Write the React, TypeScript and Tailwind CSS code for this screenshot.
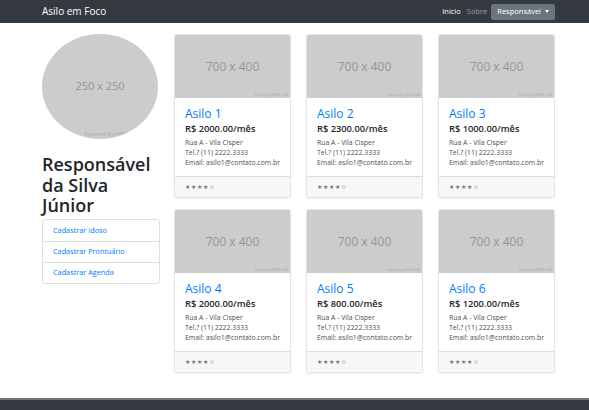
import React from "react";

const asilos = [
  { name: "Asilo 1", price: "R$ 2000.00/mês" },
  { name: "Asilo 2", price: "R$ 2300.00/mês" },
  { name: "Asilo 3", price: "R$ 1000.00/mês" },
  { name: "Asilo 4", price: "R$ 2000.00/mês" },
  { name: "Asilo 5", price: "R$ 800.00/mês" },
  { name: "Asilo 6", price: "R$ 1200.00/mês" },
];

function Card({ name, price }: { name: string; price: string }) {
  return (
    <div className="flex flex-col overflow-hidden rounded-[3px] border border-[rgba(0,0,0,0.1)] bg-white shadow-[0_1px_2px_rgba(0,0,0,0.06)]">
      <div className="relative flex h-[63px] items-center justify-center bg-[#cccccc]">
        <span className="text-[12px] text-[#969696]">700 x 400</span>
        <span className="absolute bottom-[1px] right-[2px] text-[3px] leading-none text-[#a9a9a9]">Powered by HTML.COM</span>
      </div>
      <div className="flex flex-col px-[10px] pt-[8px] pb-[8px]">
        <a className="text-[12px] leading-[15px] text-[#007bff]">{name}</a>
        <div className="mt-[2px] text-[9.3px] font-semibold leading-[12px] text-[#212529]">{price}</div>
        <div className="mt-[3px] whitespace-nowrap text-[6.9px] leading-[10px] text-[#495057]">
          <div>Rua A - Vila Cisper</div>
          <div>Tel.? (11) 2222.3333</div>
          <div>Email: asilo1@contato.com.br</div>
        </div>
      </div>
      <div className="flex h-[21px] items-center border-t border-[rgba(0,0,0,0.1)] bg-[#f7f7f7] px-[10px] text-[6px] tracking-[1px] text-[#777]">
        ★★★★☆
      </div>
    </div>
  );
}

export default function App() {
  return (
    <div className="min-h-screen bg-white font-['Open_Sans','Noto_Sans',sans-serif]">
      <nav className="flex h-[23px] items-center justify-between bg-[#343a40] pl-[42px] pr-[34px]">
        <span className="text-[10px] text-white">Asilo em Foco</span>
        <div className="flex items-center">
          <span className="text-[7.5px] text-white">Início</span>
          <span className="ml-[6px] text-[7.5px] text-[#9a9da0]">Sobre</span>
          <span className="ml-[4px] flex h-[16px] items-center rounded-[2px] bg-[#6c757d] px-[6px] text-[7.5px] text-white">
            Responsável
            <span className="ml-[4px] inline-block h-0 w-0 border-x-[2.5px] border-t-[3px] border-x-transparent border-t-white" />
          </span>
        </div>
      </nav>
      <main className="flex gap-[14px] pl-[42px] pt-[11px]">
        <div className="flex w-[118px] flex-col">
          <div className="relative flex h-[105px] w-[116px] items-center justify-center overflow-hidden rounded-[50%] bg-[#cccccc]">
            <span className="text-[11px] text-[#969696]">250 x 250</span>
            <span className="absolute bottom-[1px] left-[42px] whitespace-nowrap text-[5.5px] text-[#a9a9a9]">Powered by HTML.COM</span>
          </div>
          <h1 className="mt-[15px] text-[18px] font-semibold leading-[20.5px] text-[#212529]">
            Responsável da Silva Júnior
          </h1>
          <div className="mt-[3px] flex flex-col rounded-[3px] border border-[rgba(0,0,0,0.125)]">
            <a className="flex h-[21px] items-center px-[10px] text-[7.3px] text-[#007bff]">Cadastrar Idoso</a>
            <a className="flex h-[21px] items-center border-t border-[rgba(0,0,0,0.125)] px-[10px] text-[7.3px] text-[#007bff]">Cadastrar Prontuário</a>
            <a className="flex h-[21px] items-center border-t border-[rgba(0,0,0,0.125)] px-[10px] text-[7.3px] text-[#007bff]">Cadastrar Agenda</a>
          </div>
        </div>
        <div className="grid w-[381px] grid-cols-3 gap-x-[15px] gap-y-[11px]">
          {asilos.map((a) => (
            <Card key={a.name} name={a.name} price={a.price} />
          ))}
        </div>
      </main>
      <footer className="mt-[25px] h-[40px] border-t-2 border-[#6c737a] bg-[#343a40]" />
    </div>
  );
}
